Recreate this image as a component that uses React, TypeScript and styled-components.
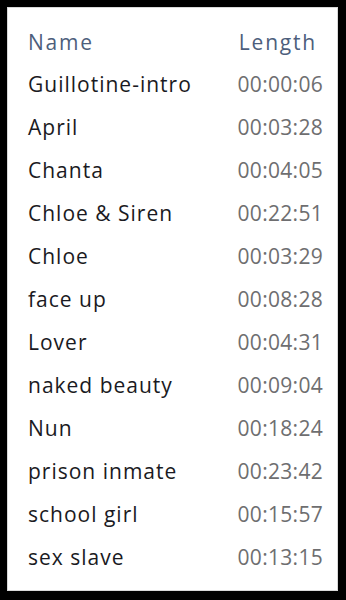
import styled, { createGlobalStyle } from 'styled-components';

const GlobalStyle = createGlobalStyle`
  html, body {
    margin: 0;
    padding: 0;
    background: #000;
  }
  body {
    font-family: 'Open Sans', 'Noto Sans', 'DejaVu Sans', sans-serif;
  }
`;

interface Track {
  name: string;
  length: string;
}

const tracks: Track[] = [
  { name: 'Guillotine-intro', length: '00:00:06' },
  { name: 'April', length: '00:03:28' },
  { name: 'Chanta', length: '00:04:05' },
  { name: 'Chloe & Siren', length: '00:22:51' },
  { name: 'Chloe', length: '00:03:29' },
  { name: 'face up', length: '00:08:28' },
  { name: 'Lover', length: '00:04:31' },
  { name: 'naked beauty', length: '00:09:04' },
  { name: 'Nun', length: '00:18:24' },
  { name: 'prison inmate', length: '00:23:42' },
  { name: 'school girl', length: '00:15:57' },
  { name: 'sex slave', length: '00:13:15' },
];

const App = () => {
  return (
    <>
      <GlobalStyle />
      <Frame>
        <Panel>
          <HeaderRow>
            <HeaderCell>Name</HeaderCell>
            <HeaderCell $right>Length</HeaderCell>
          </HeaderRow>
          {tracks.map((t) => (
            <Row key={t.name}>
              <NameCell>{t.name}</NameCell>
              <LengthCell>{t.length}</LengthCell>
            </Row>
          ))}
        </Panel>
      </Frame>
    </>
  );
};

const Frame = styled.div`
  width: 346px;
  height: 600px;
  box-sizing: border-box;
  padding: 7px 8px 9px 7px;
  background: #000;
`;

const Panel = styled.div`
  height: 100%;
  box-sizing: border-box;
  background: #fff;
  border: 1px solid #d8d8d8;
  padding: 18px 14px 0 20px;
  display: flex;
  flex-direction: column;
`;

const HeaderRow = styled.div`
  display: flex;
  justify-content: space-between;
  align-items: center;
  height: 32px;
  margin-bottom: 4px;
`;

const HeaderCell = styled.span<{ $right?: boolean }>`
  font-size: 21px;
  line-height: 28px;
  letter-spacing: 1.8px;
  color: #4d5e7c;
  margin-right: ${(p) => (p.$right ? '6px' : '0')};
`;

const Row = styled.div`
  display: flex;
  justify-content: space-between;
  align-items: center;
  height: 43px;
`;

const NameCell = styled.span`
  font-size: 21px;
  line-height: 28px;
  letter-spacing: 1px;
  color: #1a1a22;
`;

const LengthCell = styled.span`
  font-size: 21px;
  line-height: 28px;
  letter-spacing: 0.3px;
  color: #6e6e70;
`;

export default App;
